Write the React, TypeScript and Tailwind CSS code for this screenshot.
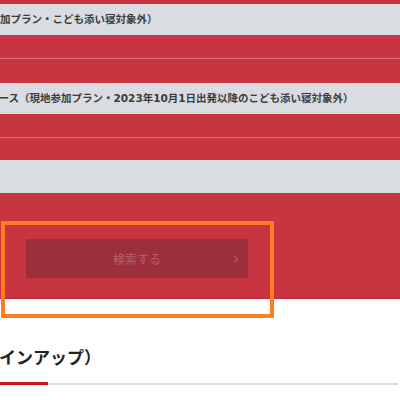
const jp = "font-['Noto_Sans_CJK_JP','Noto_Sans',sans-serif]";

function PlanRow({ text, shift }: { text: string; shift: string }) {
  return (
    <div className="flex h-[31px] items-center overflow-hidden bg-[#d9dce0]">
      <span
        className={`whitespace-nowrap font-['DejaVu_Sans','Noto_Sans_CJK_JP',sans-serif] text-[10.5px] font-bold text-[#3c3c3c] ${shift}`}
      >
        {text}
      </span>
    </div>
  );
}

export default function App() {
  return (
    <div className={`relative h-[400px] w-[400px] overflow-hidden bg-white ${jp}`}>
      <div className="h-1 bg-[#c8343f]" />
      <PlanRow text="（現地参加プラン・こども添い寝対象外）" shift="-ml-[42px]" />
      <div className="flex flex-col">
        <div className="h-[23px] bg-[#c8343f]" />
        <div className="h-px bg-[#df6c74]" />
        <div className="h-[24px] bg-[#c8343f]" />
      </div>
      <PlanRow
        text="コース（現地参加プラン・2023年10月1日出発以降のこども添い寝対象外）"
        shift="-ml-[12px]"
      />
      <div className="flex flex-col">
        <div className="h-[23px] bg-[#c8343f]" />
        <div className="h-px bg-[#df6c74]" />
        <div className="h-[22px] bg-[#c8343f]" />
      </div>
      <div className="h-[33px] bg-[#d9dce0]" />

      <div className="border-b border-[#b92433] bg-[#c8343f] pb-[20px] pl-[26px] pt-[46px]">
        <button
          type="button"
          disabled
          className="relative flex h-[39px] w-[222px] items-center justify-center bg-[#9b2f3b] text-[12px] text-[#b5606a]"
        >
          検索する
          <svg
            viewBox="0 0 8 12"
            className="absolute right-[9px] top-1/2 h-[9px] w-[6px] -translate-y-1/2"
            fill="none"
            stroke="#b5606a"
            strokeWidth="1.4"
          >
            <path d="M1.5 1.5 6 6l-4.5 4.5" />
          </svg>
        </button>
      </div>

      <div className="pt-[45px]">
        <h2 className="-ml-[18px] whitespace-nowrap text-[17px] font-bold leading-[26px] text-[#222]">
          ラインアップ）
        </h2>
        <div className="mt-[12px] flex items-end">
          <div className="h-[3px] w-[48px] bg-[#c8161d]" />
          <div className="h-[2px] w-[350px] bg-[#dcdcdc]" />
        </div>
      </div>

      <div className="pointer-events-none absolute left-[1px] top-[221px] h-[97px] w-[273px] border-[4px] border-[#fd7f1f]" />
    </div>
  );
}
